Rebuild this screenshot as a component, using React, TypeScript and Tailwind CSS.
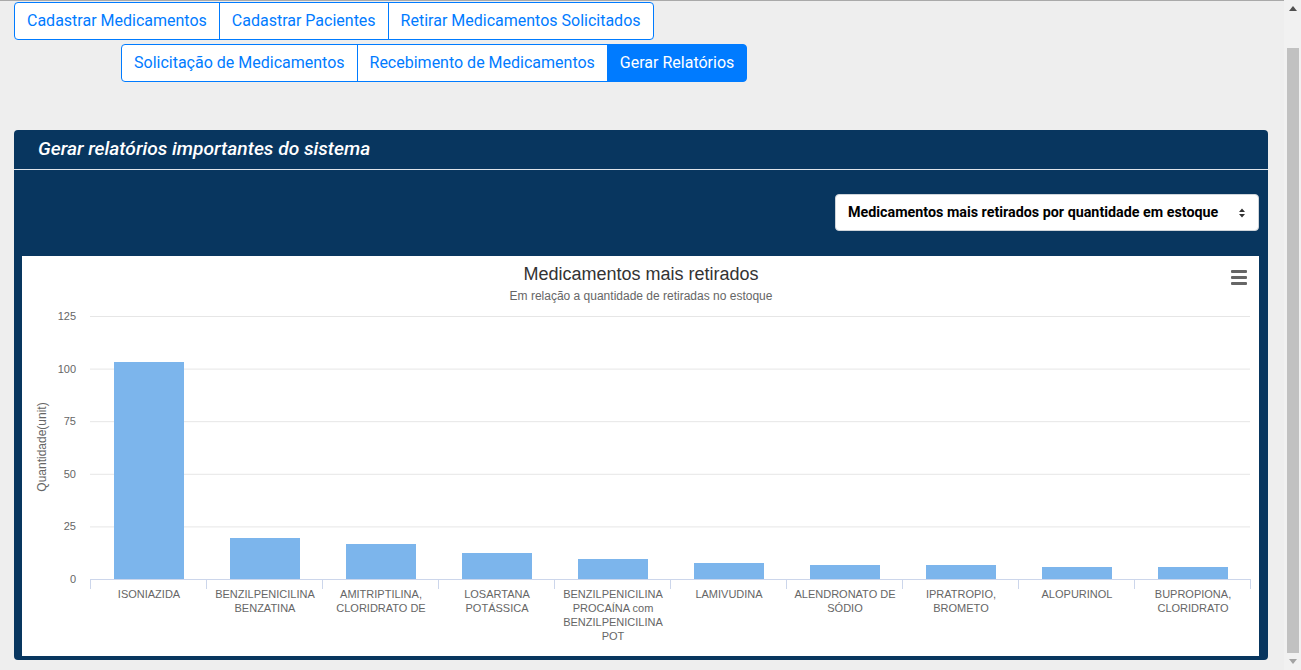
import React from 'react';

type Bar = { label: string[]; h: number };

const bars: Bar[] = [
  { label: ['ISONIAZIDA'], h: 217 },
  { label: ['BENZILPENICILINA', 'BENZATINA'], h: 41 },
  { label: ['AMITRIPTILINA,', 'CLORIDRATO DE'], h: 35 },
  { label: ['LOSARTANA', 'POTÁSSICA'], h: 26 },
  { label: ['BENZILPENICILINA', 'PROCAÍNA com', 'BENZILPENICILINA', 'POT'], h: 20 },
  { label: ['LAMIVUDINA'], h: 16 },
  { label: ['ALENDRONATO DE', 'SÓDIO'], h: 14 },
  { label: ['IPRATROPIO,', 'BROMETO'], h: 14 },
  { label: ['ALOPURINOL'], h: 12 },
  { label: ['BUPROPIONA,', 'CLORIDRATO'], h: 12 },
];

const ticks = [125, 100, 75, 50, 25, 0];

function NavGroup({ items, active }: { items: string[]; active?: string }) {
  return (
    <div className="inline-flex">
      {items.map((item, i) => (
        <button
          key={item}
          className={`px-3 py-1.5 text-base leading-6 border border-[#007bff] ${
            i > 0 ? '-ml-px' : ''
          } ${i === 0 ? 'rounded-l' : ''} ${i === items.length - 1 ? 'rounded-r' : ''} ${
            item === active ? 'bg-[#007bff] text-white' : 'bg-white text-[#007bff]'
          }`}
        >
          {item}
        </button>
      ))}
    </div>
  );
}

function Chart() {
  const left = 68;
  const cat = 116;
  const base = 323;
  return (
    <svg width="1237" height="400" className="block" style={{ fontFamily: '"Liberation Sans", Arial, sans-serif' }}>
      <rect width="1237" height="400" fill="#ffffff" />
      <text x="619" y="24" textAnchor="middle" fontSize="18" fill="#333333">
        Medicamentos mais retirados
      </text>
      <text x="619" y="44" textAnchor="middle" fontSize="12" fill="#666666">
        Em relação a quantidade de retiradas no estoque
      </text>
      <g fill="#666666">
        <rect x="1209" y="14" width="16" height="3" rx="1" />
        <rect x="1209" y="20" width="16" height="3" rx="1" />
        <rect x="1209" y="26" width="16" height="3" rx="1" />
      </g>
      {ticks.map((t, i) => {
        const y = 60 + i * 52.6;
        return (
          <g key={t}>
            {t !== 0 && <line x1={left} x2={left + cat * 10} y1={y + 0.5} y2={y + 0.5} stroke="#e6e6e6" />}
            <text x="54" y={y + 4} textAnchor="end" fontSize="11" fill="#666666">
              {t}
            </text>
          </g>
        );
      })}
      <text
        x="0"
        y="0"
        transform="translate(24 191) rotate(-90)"
        textAnchor="middle"
        fontSize="12"
        fill="#666666"
      >
        Quantidade(unit)
      </text>
      {bars.map((b, i) => (
        <rect key={i} x={left + i * cat + 24} y={base - b.h} width="70" height={b.h} fill="#7cb5ec" />
      ))}
      <line x1={left} x2={left + cat * 10} y1={base + 0.5} y2={base + 0.5} stroke="#ccd6eb" />
      {Array.from({ length: 11 }).map((_, i) => (
        <line
          key={i}
          x1={left + i * cat + 0.5}
          x2={left + i * cat + 0.5}
          y1={base}
          y2={base + 10}
          stroke="#ccd6eb"
        />
      ))}
      {bars.map((b, i) => (
        <text key={i} textAnchor="middle" fontSize="11" fill="#666666">
          {b.label.map((l, j) => (
            <tspan key={j} x={left + i * cat + 59} y={342 + j * 14}>
              {l}
            </tspan>
          ))}
        </text>
      ))}
    </svg>
  );
}

export default function App() {
  return (
    <div className="h-[670px] flex bg-[#eeeeee] overflow-hidden" style={{ fontFamily: 'Roboto, "Noto Sans", sans-serif' }}>
      <div className="flex-1 border-t border-[#a9a9a9] pt-px">
        <div className="pl-[14px]">
          <NavGroup items={['Cadastrar Medicamentos', 'Cadastrar Pacientes', 'Retirar Medicamentos Solicitados']} />
        </div>
        <div className="pl-[121px] mt-1">
          <NavGroup
            items={['Solicitação de Medicamentos', 'Recebimento de Medicamentos', 'Gerar Relatórios']}
            active="Gerar Relatórios"
          />
        </div>
        <div className="ml-[14px] mr-[16px] mt-[48px] bg-[#08365f] rounded pb-1">
          <div className="h-10 px-6 flex items-center border-b border-[#dfe4ea]">
            <h2 className="text-white text-[19.2px] italic font-medium">Gerar relatórios importantes do sistema</h2>
          </div>
          <div className="pl-2 pr-[9px] pt-6">
            <div className="flex justify-end">
              <div className="w-[424px] h-[37px] bg-white rounded border border-[#ced4da] flex items-center justify-between pl-3 pr-3">
                <span className="text-[14.3px] font-bold text-black">Medicamentos mais retirados por quantidade em estoque</span>
                <svg width="8" height="12" viewBox="0 0 8 12">
                  <path d="M4 1.5 L7 5 H1 Z M4 10.5 L7 7 H1 Z" fill="#333" />
                </svg>
              </div>
            </div>
            <div className="mt-[25px]">
              <Chart />
            </div>
          </div>
        </div>
      </div>
      <div className="w-[17px] bg-[#f1f1f1] flex flex-col items-center">
        <div className="h-[17px] flex items-center justify-center">
          <svg width="8" height="5" viewBox="0 0 8 5">
            <path d="M0 5 L4 0 L8 5 Z" fill="#505050" />
          </svg>
        </div>
        <div className="mt-[31px] w-[12px] h-[605px] bg-[#c1c1c1] ml-[1px]" />
        <div className="flex-1 flex items-center justify-center">
          <svg width="8" height="5" viewBox="0 0 8 5">
            <path d="M0 0 L8 0 L4 5 Z" fill="#a3a3a3" />
          </svg>
        </div>
      </div>
    </div>
  );
}
